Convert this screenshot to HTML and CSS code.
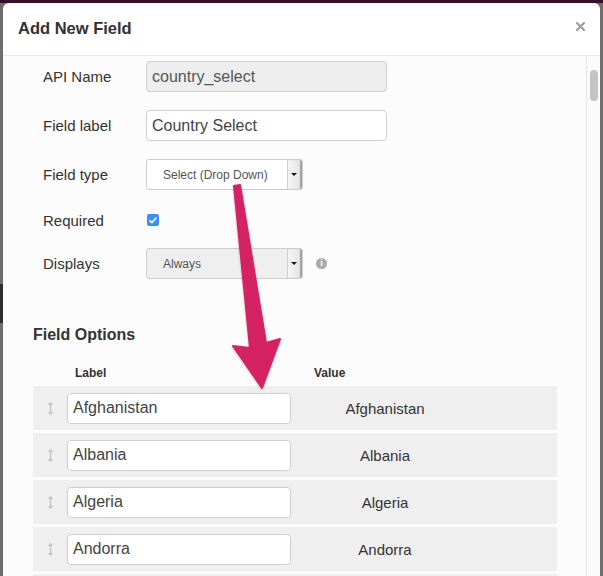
FILE: index.html
```html
<!DOCTYPE html>
<html lang="en">
<head>
    <meta charset="UTF-8">
    <meta name="viewport" content="width=device-width, initial-scale=1.0">
    <title>Add New Field</title>
    <link rel="stylesheet" href="styles.css">
</head>
<body>
    <div class="page">
        <div class="modal">
            <div class="modal-header">
                <h4 class="modal-title">Add New Field</h4>
                <button class="close" aria-label="Close">
                    <svg width="9" height="9" viewBox="0 0 9 9"><path d="M1 1L8 8M8 1L1 8" stroke="#9b9b9b" stroke-width="2" stroke-linecap="round"/></svg>
                </button>
            </div>

            <div class="modal-main">
                <div class="modal-body">
                    <div class="form-row">
                        <label>API Name</label>
                        <input class="input" type="text" value="country_select" disabled>
                    </div>
                    <div class="form-row">
                        <label>Field label</label>
                        <input class="input" type="text" value="Country Select">
                    </div>
                    <div class="form-row">
                        <label>Field type</label>
                        <div class="select">
                            <span class="select-text">Select (Drop Down)</span>
                            <span class="select-btn"><span class="caret"></span></span>
                        </div>
                    </div>
                    <div class="form-row form-row-check">
                        <label>Required</label>
                        <span class="checkbox">
                            <svg width="8" height="7" viewBox="0 0 8 7"><path d="M1 3.8L3 5.6L7 1" fill="none" stroke="#fff" stroke-width="1.6" stroke-linecap="round" stroke-linejoin="round"/></svg>
                        </span>
                    </div>
                    <div class="form-row">
                        <label>Displays</label>
                        <div class="select select-muted">
                            <span class="select-text">Always</span>
                            <span class="select-btn"><span class="caret"></span></span>
                        </div>
                        <span class="info-icon">i</span>
                    </div>

                    <h5 class="section-title">Field Options</h5>

                    <div class="options-head">
                        <span class="head-label">Label</span>
                        <span class="head-value">Value</span>
                    </div>

                    <div class="option-row">
                        <span class="handle"><svg width="7" height="15" viewBox="0 0 7 15"><path d="M3.5 3V12" stroke="#c4c4c4" stroke-width="1.4"/><path d="M0.8 4L3.5 0.8L6.2 4Z M0.8 11L3.5 14.2L6.2 11Z" fill="#c4c4c4"/></svg></span>
                        <input class="input option-input" type="text" value="Afghanistan">
                        <span class="option-value">Afghanistan</span>
                    </div>
                    <div class="option-row">
                        <span class="handle"><svg width="7" height="15" viewBox="0 0 7 15"><path d="M3.5 3V12" stroke="#c4c4c4" stroke-width="1.4"/><path d="M0.8 4L3.5 0.8L6.2 4Z M0.8 11L3.5 14.2L6.2 11Z" fill="#c4c4c4"/></svg></span>
                        <input class="input option-input" type="text" value="Albania">
                        <span class="option-value">Albania</span>
                    </div>
                    <div class="option-row">
                        <span class="handle"><svg width="7" height="15" viewBox="0 0 7 15"><path d="M3.5 3V12" stroke="#c4c4c4" stroke-width="1.4"/><path d="M0.8 4L3.5 0.8L6.2 4Z M0.8 11L3.5 14.2L6.2 11Z" fill="#c4c4c4"/></svg></span>
                        <input class="input option-input" type="text" value="Algeria">
                        <span class="option-value">Algeria</span>
                    </div>
                    <div class="option-row">
                        <span class="handle"><svg width="7" height="15" viewBox="0 0 7 15"><path d="M3.5 3V12" stroke="#c4c4c4" stroke-width="1.4"/><path d="M0.8 4L3.5 0.8L6.2 4Z M0.8 11L3.5 14.2L6.2 11Z" fill="#c4c4c4"/></svg></span>
                        <input class="input option-input" type="text" value="Andorra">
                        <span class="option-value">Andorra</span>
                    </div>
                    <div class="option-row"></div>
                </div>

                <div class="scroll-track"><div class="scroll-thumb"></div></div>
            </div>
        </div>

        <!-- annotation arrow drawn over the dialog -->
        <svg class="arrow" width="603" height="576" viewBox="0 0 603 576">
            <defs>
                <filter id="shadow" x="-20%" y="-20%" width="140%" height="140%">
                    <feDropShadow dx="0" dy="1" stdDeviation="1.2" flood-color="#000" flood-opacity="0.25"/>
                </filter>
            </defs>
            <polygon points="234,186 240,185 266,343 280,339 262,388 233,346 250,348" fill="#d42463" stroke="#d42463" stroke-width="2" stroke-linejoin="round" filter="url(#shadow)"/>
        </svg>
    </div>
</body>
</html>
```

FILE: styles.css
```css
body {
    margin: 0;
    font-family: "Liberation Sans", Arial, sans-serif;
    color: #333;
}

.page {
    position: relative;
    height: 576px;
    overflow: hidden;
    padding-top: 3px;
    box-sizing: border-box;
    background:
        linear-gradient(to bottom, #6e6e6e 281px, #2e2e2e 281px, #2e2e2e 320px, #6e6e6e 320px) 0 3px / 3px 100% no-repeat,
        linear-gradient(to bottom, #3d0c2b 3px, #6e6e6e 3px);
}

.modal {
    margin-left: 3px;
    width: 597px;
    height: 573px;
    background-color: #fff;
    border-radius: 6px 6px 0 0;
    display: flex;
    flex-direction: column;
    overflow: hidden;
}

.modal-header {
    height: 52px;
    flex-shrink: 0;
    padding: 0 15px;
    display: flex;
    align-items: center;
    justify-content: space-between;
    border-bottom: 1px solid #e6e6e6;
}

.modal-title {
    margin: 0;
    margin-top: -2px;
    font-size: 16.5px;
    font-weight: bold;
    color: #333;
}

.close {
    border: none;
    background: none;
    padding: 0;
    margin-top: -6px;
    width: 9px;
    height: 9px;
    display: flex;
}

.modal-main {
    flex: 1;
    display: flex;
    background-color: #fcfcfc;
    min-height: 0;
}

.modal-body {
    flex: 1;
    padding: 5px 0 0 30px;
    overflow: hidden;
}

.scroll-track {
    width: 14px;
    flex-shrink: 0;
    border-left: 1px solid #e6e6e6;
    background-color: #fbfbfb;
    box-sizing: border-box;
    padding: 14px 0 0 3px;
}

.scroll-thumb {
    width: 8px;
    height: 31px;
    border-radius: 4px;
    background-color: #c3c3c3;
}

/* form rows */
.form-row {
    display: flex;
    align-items: center;
    height: 31px;
    margin-bottom: 18px;
    padding-left: 10px;
}

.form-row label {
    width: 103px;
    font-size: 15px;
    color: #333;
}

.form-row-check {
    height: 24px;
    margin-bottom: 16px;
}

.input {
    width: 241px;
    height: 31px;
    box-sizing: border-box;
    border: 1px solid #cfcfcf;
    border-radius: 4px;
    padding: 0 5px;
    font-family: "Liberation Sans", Arial, sans-serif;
    font-size: 16px;
    color: #444;
    background-color: #fff;
}

.input:disabled {
    background-color: #eee;
    color: #555;
}

.select {
    width: 157px;
    height: 31px;
    box-sizing: border-box;
    border: 1px solid #cdcdcd;
    border-radius: 3px;
    background-color: #fff;
    display: flex;
    overflow: hidden;
}

.select-muted {
    background-color: #efefef;
}

.select-text {
    flex: 1;
    padding-left: 16px;
    font-size: 12px;
    line-height: 31px;
    color: #555;
}

.select-btn {
    width: 14px;
    border-left: 1px solid #cfcfcf;
    background: linear-gradient(to right, #f6f6f6, #e2e2e2);
    box-shadow: inset -2px 0 1px rgba(0, 0, 0, 0.3);
    display: flex;
    align-items: center;
    justify-content: center;
}

.caret {
    width: 0;
    height: 0;
    margin-right: 2px;
    border-left: 3px solid transparent;
    border-right: 3px solid transparent;
    border-top: 3px solid #2c0a20;
}

.checkbox {
    width: 12px;
    height: 12px;
    margin-left: 1px;
    border-radius: 2px;
    background-color: #3d8ef5;
    display: flex;
    align-items: center;
    justify-content: center;
}

.info-icon {
    width: 11px;
    height: 11px;
    margin-left: 13px;
    border-radius: 50%;
    background-color: #aaa;
    color: #fff;
    font-size: 9px;
    font-weight: bold;
    line-height: 11px;
    text-align: center;
}

/* field options */
.section-title {
    margin: 46px 0 20px;
    font-size: 16px;
    line-height: 20px;
    font-weight: bold;
    color: #333;
}

.options-head {
    display: flex;
    height: 16px;
    line-height: 16px;
    margin-bottom: 5px;
    font-size: 12px;
    font-weight: bold;
    color: #333;
}

.head-label {
    width: 239px;
    padding-left: 42px;
}

.option-row {
    width: 524px;
    height: 44px;
    margin-bottom: 3px;
    background-color: #efefef;
    display: flex;
    align-items: center;
}

.handle {
    width: 34px;
    display: flex;
    justify-content: center;
}

.option-input {
    width: 224px;
}

.option-value {
    width: 188px;
    text-align: center;
    font-size: 15px;
    color: #333;
}

.arrow {
    position: absolute;
    left: 0;
    top: 0;
    pointer-events: none;
}
```
